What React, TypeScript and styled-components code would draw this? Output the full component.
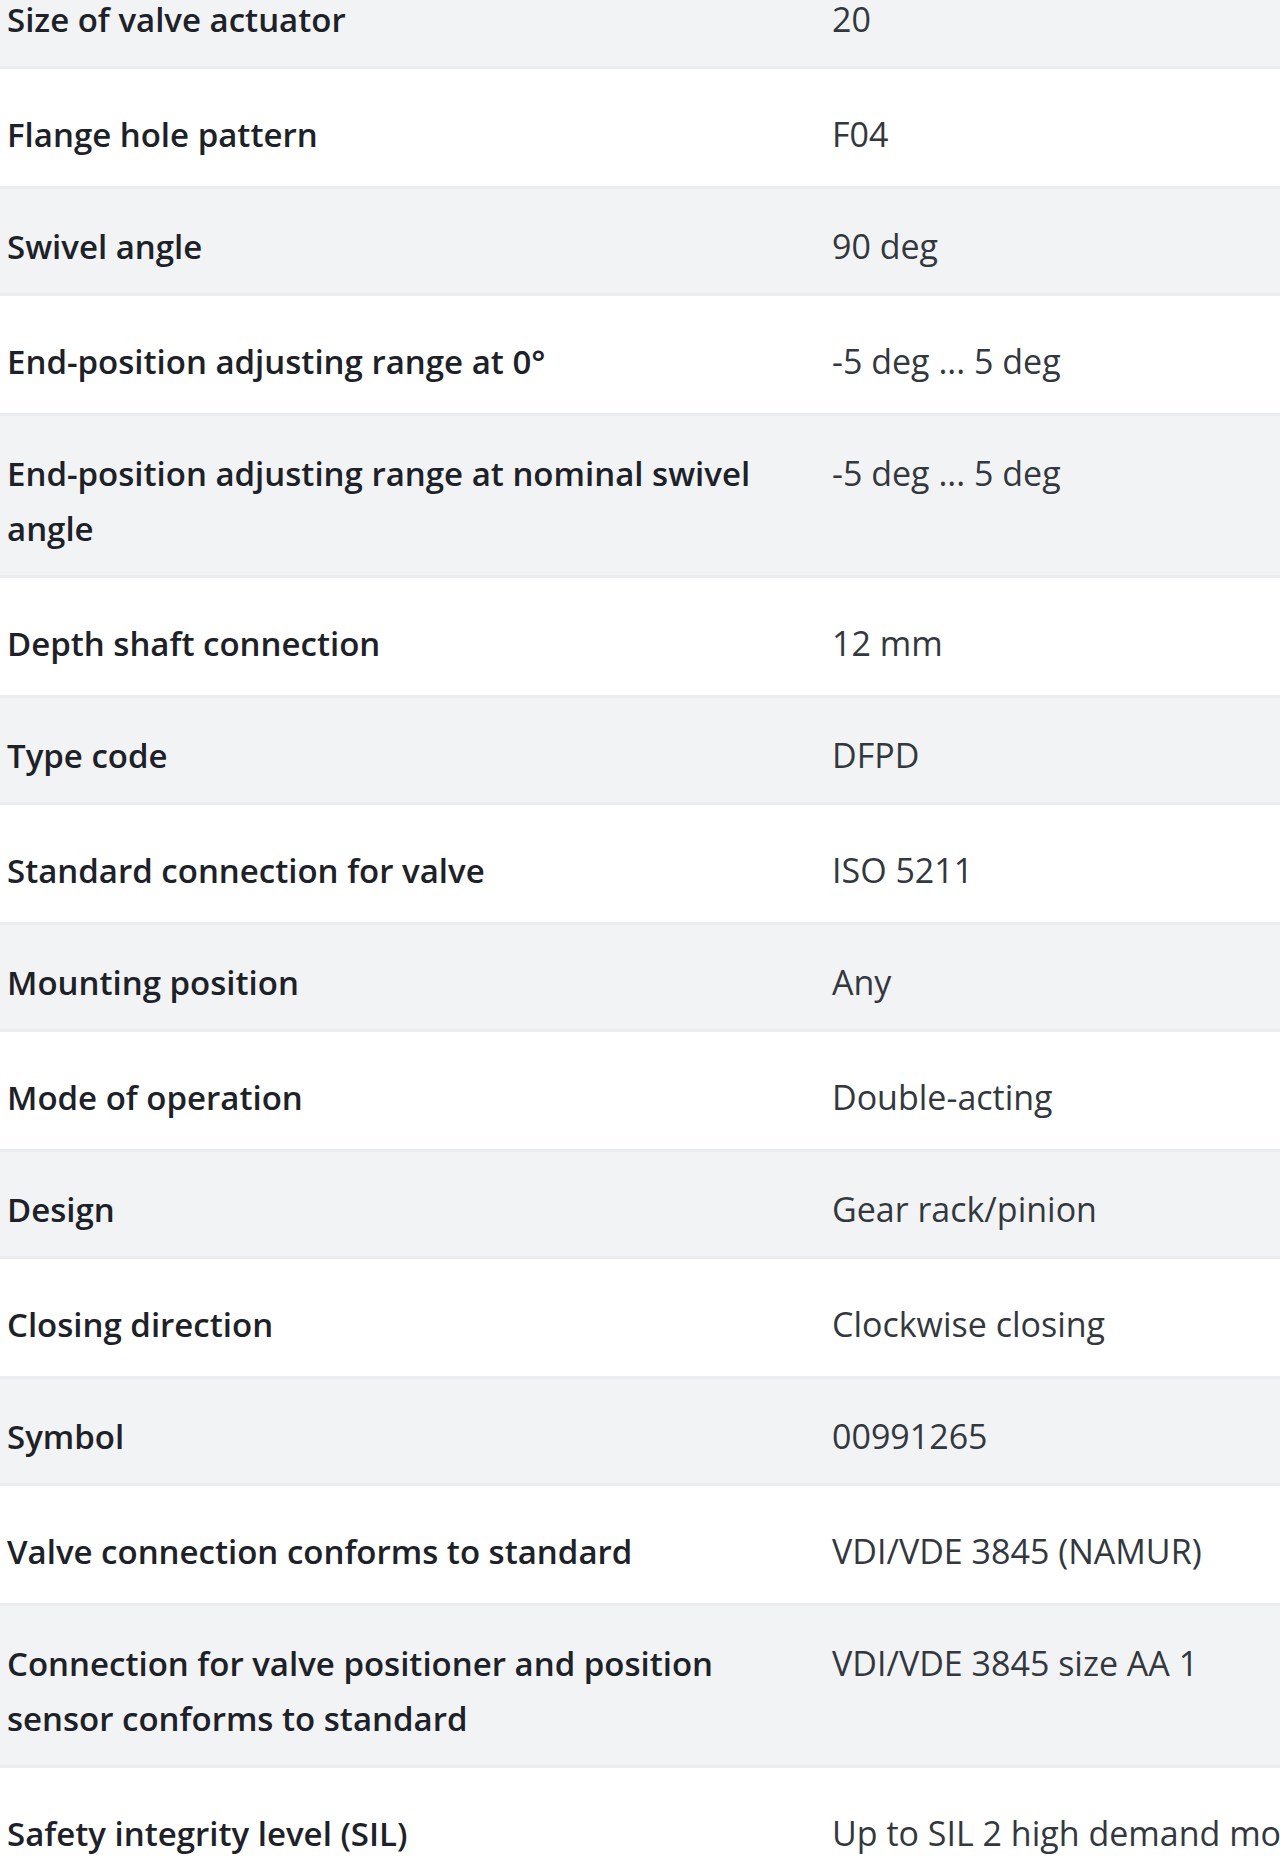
import React from "react";
import styled, { createGlobalStyle } from "styled-components";

const GlobalStyle = createGlobalStyle`
  html, body {
    margin: 0;
    padding: 0;
    background: #ffffff;
    overflow: hidden;
  }
  body {
    font-family: "Open Sans", "Noto Sans", Arial, sans-serif;
  }
`;

const Table = styled.div`
  width: 1600px;
  margin-top: -38px;
  display: flex;
  flex-direction: column;
`;

const Row = styled.div<{ $shaded: boolean }>`
  display: grid;
  grid-template-columns: 832px 1fr;
  align-items: baseline;
  background: ${(p) => (p.$shaded ? "#f2f3f5" : "#ffffff")};
  padding-top: ${(p) => (p.$shaded ? "29.5px" : "37.5px")};
  padding-bottom: ${(p) => (p.$shaded ? "19.5px" : "24.5px")};
  border-bottom: 3px solid #eaecef;
`;

const Label = styled.div`
  padding: 0 40px 0 7px;
  font-family: "Open Sans", "Noto Sans", sans-serif;
  font-weight: 600;
  font-size: 33px;
  line-height: 55px;
  color: #1d2128;
`;

const Value = styled.div`
  font-family: "Open Sans", "Noto Sans", sans-serif;
  font-weight: 400;
  font-size: 34px;
  line-height: 55px;
  color: #33383e;
  white-space: nowrap;
`;

const specs: [string, string][] = [
  ["Size of valve actuator", "20"],
  ["Flange hole pattern", "F04"],
  ["Swivel angle", "90 deg"],
  ["End-position adjusting range at 0°", "-5 deg ... 5 deg"],
  ["End-position adjusting range at nominal swivel angle", "-5 deg ... 5 deg"],
  ["Depth shaft connection", "12 mm"],
  ["Type code", "DFPD"],
  ["Standard connection for valve", "ISO 5211"],
  ["Mounting position", "Any"],
  ["Mode of operation", "Double-acting"],
  ["Design", "Gear rack/pinion"],
  ["Closing direction", "Clockwise closing"],
  ["Symbol", "00991265"],
  ["Valve connection conforms to standard", "VDI/VDE 3845 (NAMUR)"],
  [
    "Connection for valve positioner and position sensor conforms to standard",
    "VDI/VDE 3845 size AA 1",
  ],
  ["Safety integrity level (SIL)", "Up to SIL 2 high demand mode"],
];

export default function App() {
  return (
    <>
      <GlobalStyle />
      <Table>
        {specs.map(([label, value], i) => (
          <Row key={label} $shaded={i % 2 === 0}>
            <Label>{label}</Label>
            <Value>{value}</Value>
          </Row>
        ))}
      </Table>
    </>
  );
}
